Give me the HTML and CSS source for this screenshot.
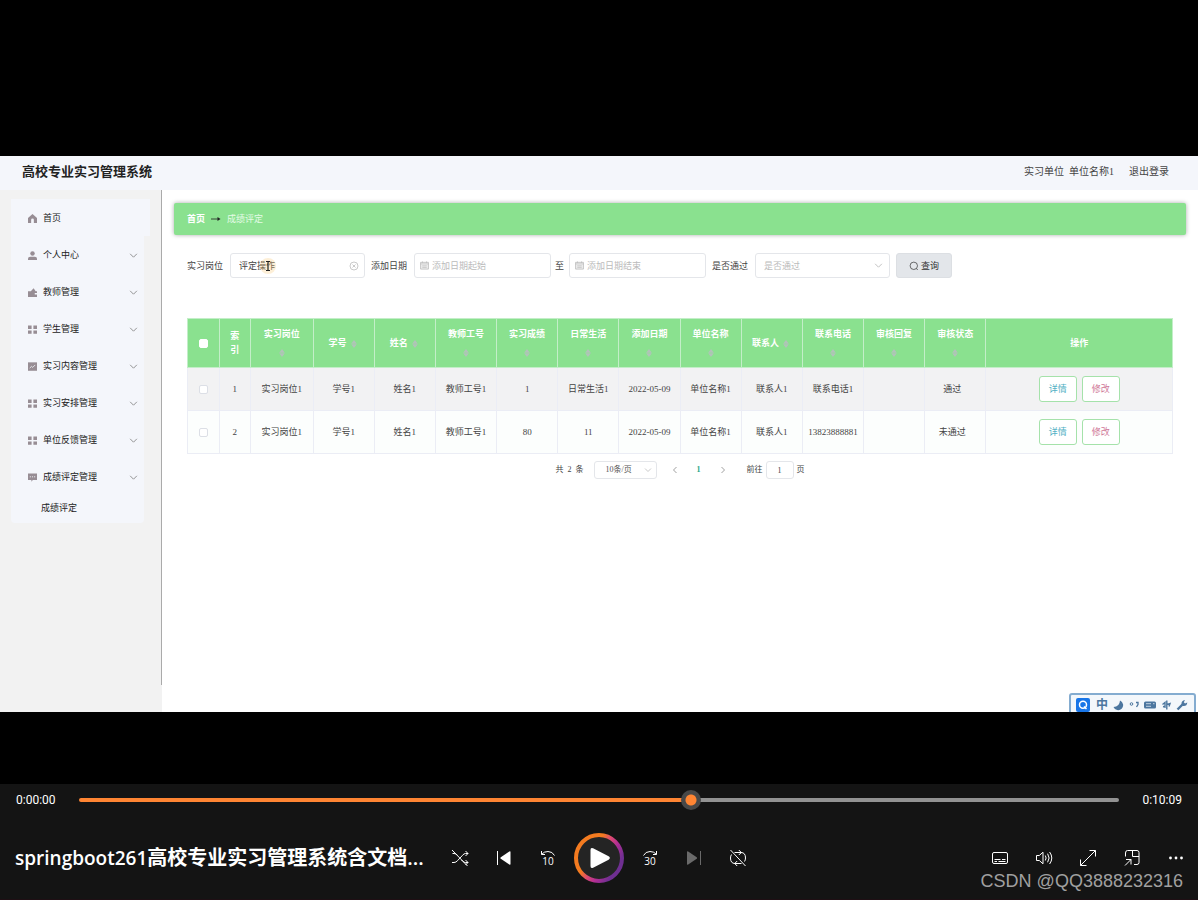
FILE: index.html
```
<!DOCTYPE html>
<html lang="zh-CN">
<head>
<meta charset="utf-8">
<title>高校专业实习管理系统</title>
<link rel="stylesheet" href="styles.css">
</head>
<body>
<svg class="sprite" aria-hidden="true">
  <symbol id="down" viewBox="0 0 8 8"><path d="M1 2.5l3 3 3-3" fill="none" stroke="currentColor" stroke-width=".8"/></symbol>
  <symbol id="sort" viewBox="0 0 6 8"><path d="M3 0L5.800 3.700H.2zM3 8l2.800-3.700H.2z" fill="currentColor"/></symbol>
  <symbol id="grid" viewBox="0 0 8 8"><path d="M0 .5h3.200v3H0zM4.800.5H8v3H4.800zM0 4.800h3.200v3H0zM4.800 4.800H8v3H4.800z" fill="currentColor"/></symbol>
  <symbol id="cal" viewBox="0 0 8 8"><path d="M.5 1.200h7v6h-7z" fill="#eee" stroke="currentColor" stroke-width=".7"/><path d="M.5 2.600h7M2.200.3v1.500M5.800.3v1.500M2 4.300h4M2 5.700h4" fill="none" stroke="currentColor" stroke-width=".6"/></symbol>
</svg>
<main class="stage">
  <section class="app">
    <header class="top">
      <h1 class="brand">高校专业实习管理系统</h1>
      <div class="user"><span>实习单位&nbsp; 单位名称1</span><a href="#">退出登录</a></div>
    </header>
    <div class="body">
      <aside class="side">
        <nav class="rail">
          <ul class="menu">
            <li><a class="item home" href="#"><svg class="ico" viewBox="0 0 8 8"><path d="M4 0L0 3.600V8h2.800V5.200a1.200 1.200 0 0 1 2.400 0V8H8V3.600z" fill="currentColor"/></svg>首页</a></li>
            <li><a class="item" href="#"><svg class="ico" viewBox="0 0 8 8"><circle cx="4" cy="2.200" r="2" fill="currentColor"/><path d="M0 8V6.600Q0 5 2 5h4q2 0 2 1.600V8z" fill="currentColor"/></svg>个人中心<svg class="arrow"><use href="#down"/></svg></a></li>
            <li><a class="item" href="#"><svg class="ico" viewBox="0 0 8 8"><path d="M0 2.800h2.500L5 .3l1.800 2.500H8v1.700H6v1.300h2V8H0z" fill="currentColor"/></svg>教师管理<svg class="arrow"><use href="#down"/></svg></a></li>
            <li><a class="item" href="#"><svg class="ico"><use href="#grid"/></svg>学生管理<svg class="arrow"><use href="#down"/></svg></a></li>
            <li><a class="item" href="#"><svg class="ico" viewBox="0 0 8 8"><path d="M0 .3h8v7.500H0z" fill="currentColor"/><path d="M1.500 5.400l1.700-1.500 1 .9 2.200-2.200" fill="none" stroke="#f4f6fb" stroke-width=".7"/></svg>实习内容管理<svg class="arrow"><use href="#down"/></svg></a></li>
            <li><a class="item" href="#"><svg class="ico"><use href="#grid"/></svg>实习安排管理<svg class="arrow"><use href="#down"/></svg></a></li>
            <li><a class="item" href="#"><svg class="ico"><use href="#grid"/></svg>单位反馈管理<svg class="arrow"><use href="#down"/></svg></a></li>
            <li><a class="item" href="#"><svg class="ico" viewBox="0 0 8 8"><path d="M0 .5h8v5.800H4.300L3 7.800V6.300H0z" fill="currentColor"/><path d="M1.600 3.400h1M3.500 3.400h1M5.400 3.400h1" stroke="#f4f6fb" stroke-width=".8"/></svg>成绩评定管理<svg class="arrow"><use href="#down"/></svg></a>
              <a class="sub" href="#">成绩评定</a></li>
          </ul>
        </nav>
      </aside>
      <div class="content">
        <nav class="crumb"><b>首页</b><svg class="to" viewBox="0 0 10 6"><path d="M0 3h7" stroke="#222" stroke-width=".8"/><path d="M6.500 1L9.500 3l-3 2z" fill="#222"/></svg><span>成绩评定</span></nav>
        <form class="filters">
          <label for="post">实习岗位</label>
          <div class="field"><input id="post" value="评定操作"><svg class="clear" viewBox="0 0 10 10"><path d="M3.500 3.500l3 3m0-3l-3 3" stroke="currentColor" stroke-width=".8"/><circle cx="5" cy="5" r="4" fill="none" stroke="currentColor" stroke-width=".8"/></svg>
            <svg class="pointer" viewBox="0 0 16 16"><circle cx="8" cy="8" r="8" fill="#f7c97a" opacity=".3"/><path d="M6 3.500h4M8 3.500v9M6 12.500h4" stroke="#222" fill="none"/></svg></div>
          <label for="from">添加日期</label>
          <div class="field date"><svg class="cal"><use href="#cal"/></svg><input id="from" placeholder="添加日期起始"></div>
          <label class="until" for="until">至</label>
          <div class="field date"><svg class="cal"><use href="#cal"/></svg><input id="until" placeholder="添加日期结束"></div>
          <label for="pass">是否通过</label>
          <div class="field"><select id="pass"><option>是否通过</option></select><svg class="drop"><use href="#down"/></svg></div>
          <button class="query" type="button"><svg class="lens" viewBox="0 0 10 10"><circle cx="4.800" cy="4.800" r="3.700" fill="none" stroke="currentColor" stroke-width=".7"/><path d="M7.300 7.500l1.500 1.500" stroke="currentColor" stroke-width=".7"/></svg>查询</button>
        </form>
        <table class="grid">
          <colgroup><col class="c-s"><col class="c-s"><col class="c-l"><col class="c-m" span="11"><col></colgroup>
          <thead><tr>
            <th><input type="checkbox" aria-label="全选"></th><th>索<br>引</th>
            <th>实习岗位 <svg class="sort"><use href="#sort"/></svg></th><th>学号 <svg class="sort"><use href="#sort"/></svg></th><th>姓名 <svg class="sort"><use href="#sort"/></svg></th><th>教师工号 <svg class="sort"><use href="#sort"/></svg></th><th>实习成绩 <svg class="sort"><use href="#sort"/></svg></th><th>日常生活 <svg class="sort"><use href="#sort"/></svg></th><th>添加日期 <svg class="sort"><use href="#sort"/></svg></th><th>单位名称 <svg class="sort"><use href="#sort"/></svg></th><th>联系人 <svg class="sort"><use href="#sort"/></svg></th><th>联系电话 <svg class="sort"><use href="#sort"/></svg></th><th>审核回复 <svg class="sort"><use href="#sort"/></svg></th><th>审核状态 <svg class="sort"><use href="#sort"/></svg></th><th>操作</th>
          </tr></thead>
          <tbody>
            <tr class="hover"><td><input type="checkbox" aria-label="选择 1"></td><td>1</td><td>实习岗位1</td><td>学号1</td><td>姓名1</td><td>教师工号1</td><td>1</td><td>日常生活1</td><td>2022-05-09</td><td>单位名称1</td><td>联系人1</td><td>联系电话1</td><td></td><td class="state">通过</td><td><div class="acts"><button class="view">详情</button><button class="edit">修改</button></div></td></tr>
            <tr><td><input type="checkbox" aria-label="选择 2"></td><td>2</td><td>实习岗位1</td><td>学号1</td><td>姓名1</td><td>教师工号1</td><td>80</td><td>11</td><td>2022-05-09</td><td>单位名称1</td><td>联系人1</td><td>13823888881</td><td></td><td class="state">未通过</td><td><div class="acts"><button class="view">详情</button><button class="edit">修改</button></div></td></tr>
          </tbody>
        </table>
        <div class="pager">
          <span class="total">共&nbsp; 2 &nbsp;条</span>
          <div class="field size"><select aria-label="每页条数"><option>10条/页</option></select><svg class="drop"><use href="#down"/></svg></div>
          <button class="turn" aria-label="上一页"><svg viewBox="0 0 8 8"><path d="M5.500 1l-3 3 3 3" fill="none" stroke="currentColor" stroke-width=".8"/></svg></button>
          <button class="turn now">1</button>
          <button class="turn" aria-label="下一页"><svg viewBox="0 0 8 8"><path d="M2.500 1l3 3-3 3" fill="none" stroke="currentColor" stroke-width=".8"/></svg></button>
          <label class="jump">前往<input value="1">页</label>
        </div>
      </div>
    </div>
    <div class="ime">
      <svg class="q" viewBox="0 0 14 14"><rect width="14" height="14" rx="2" fill="#1976e8"/><circle cx="7" cy="6.800" r="3.500" fill="none" stroke="#fff" stroke-width="1.500"/><path d="M8 8.500l2.500 2.500" stroke="#fff" stroke-width="1.500"/></svg>
      <b>中</b>
      <svg viewBox="0 0 12 12"><path d="M8 1.500a5 5 0 1 1-6.500 6.500Q7.500 8 8 1.500z" fill="currentColor"/></svg>
      <svg viewBox="0 0 12 12"><circle cx="3.500" cy="5" r="1.300" fill="none" stroke="currentColor"/><path d="M8 3.500h2v2L8.500 8" fill="none" stroke="currentColor" stroke-width="1.300"/></svg>
      <svg viewBox="0 0 12 12"><rect y="2.500" width="12" height="7" rx="1.500" fill="currentColor"/><path d="M2 4.700h5M9 4.700h1.500M2 7.300h5" stroke="#dfe9f3" stroke-width=".8"/></svg>
      <svg viewBox="0 0 12 12"><path d="M2.500 5.500L5 3.500V8L3 7.500M6.800 1.500V10.500M7 5.500L10 4.500 9 7.500" fill="none" stroke="currentColor" stroke-width="1.400"/></svg>
      <svg viewBox="0 0 12 12"><path d="M1.500 10.500l5-5" stroke="currentColor" stroke-width="2.400"/><path d="M5.500 5.500Q5 1.500 9 1L7.800 3.200 9 4.500l2.300-1Q11 7.500 7 7z" fill="currentColor"/></svg>
    </div>
  </section>
</main>
<footer class="player">
  <div class="seek">
    <span>0:00:00</span>
    <input type="range" min="0" max="1000" value="590" aria-label="播放进度">
    <span>0:10:09</span>
  </div>
  <div class="bar">
    <h2 class="name"><span>springboot261</span>高校专业实习管理系统含文档...</h2>
    <div class="keys">
      <button aria-label="随机播放"><svg viewBox="0 0 18 18"><path d="M1 13.500h2q2 0 3.500-1.800l5-5.400q1.500-1.800 3-1.800H17M1.500 4.500H3q2 0 3.500 1.800M10.500 11l1 1q1.500 1.500 3 1.500H17M14.500 2L17 4.500 14.500 7M14.500 11l2.500 2.500-2.500 2.500M1 1l15.500 16"/></svg></button>
      <button aria-label="上一个"><svg viewBox="0 0 18 18"><path d="M2.500 2v14"/><path class="solid" d="M15.500 3v12q0 1.200-1.200.5L5.800 9.800q-.9-.8 0-1.600l8.500-5.700q1.200-.7 1.200.5z"/></svg></button>
      <button aria-label="后退 10 秒"><svg viewBox="0 0 18 18"><path d="M2.500 2v3.500H6M2.800 5.200Q5 2.500 9 2.500q4.500 0 6.500 4"/><text x="9" y="15.500">10</text></svg></button>
      <button class="play" aria-label="播放"><svg viewBox="0 0 50 50"><defs><linearGradient id="ring" x1=".1" y1=".3" x2=".85" y2=".75"><stop offset=".3" stop-color="#f47b20"/><stop offset=".5" stop-color="#dd4a70"/><stop offset=".72" stop-color="#b02d95"/><stop offset="1" stop-color="#6f2f91"/></linearGradient></defs><circle cx="25" cy="25" r="23" fill="#242424" stroke="url(#ring)" stroke-width="4"/><path class="solid" d="M16.500 17v16q0 3 2.600 1.700l15.500-8q2.500-1.700 0-3.400l-15.500-8q-2.600-1.300-2.600 1.700z"/></svg></button>
      <button aria-label="前进 30 秒"><svg viewBox="0 0 18 18"><path d="M15.500 2v3.500H12M15.200 5.200Q13 2.500 9 2.500q-4.500 0-6.500 4"/><text x="9" y="15.500">30</text></svg></button>
      <button class="off" aria-label="下一个"><svg viewBox="0 0 18 18"><path d="M15.500 2v14"/><path class="solid" d="M2 3v12q0 1.200 1.200.5l8.500-5.700q.9-.8 0-1.600L3.200 2.500Q2 1.800 2 3z"/></svg></button>
      <button aria-label="循环"><svg viewBox="0 0 18 18"><path d="M5.500 3.500h6.500q4.500 0 4.500 5.500 0 2-1 3.500M9.800 1l2.500 2.500L9.800 6M12.500 14.500H6q-4.500 0-4.500-5.500 0-2 1-3.500M8.200 12l-2.500 2.500L8.200 17M1.500 1l15 16"/></svg></button>
    </div>
    <div class="keys end">
      <button aria-label="字幕"><svg viewBox="0 0 18 18"><rect x="1.500" y="3.500" width="15" height="11" rx="1.500"/><path d="M3.500 10.500h6M11 10.500h3.500M3.500 12.500H6M7.500 12.500h7"/></svg></button>
      <button aria-label="音量"><svg viewBox="0 0 18 18"><path d="M1.500 6.500h2.800L8 3.200v11.600l-3.700-3.300H1.500zM10.300 6.500q1.600 2.500 0 5M12.600 4.700q3 4.300 0 8.600M14.600 3q4.400 6 0 12"/></svg></button>
      <button aria-label="全屏"><svg viewBox="0 0 18 18"><path d="M10.500 1.500h6v6M1.500 10.500v6h6M16.500 1.500l-15 15"/></svg></button>
      <button aria-label="迷你播放器"><svg viewBox="0 0 18 18"><path d="M2.500 7.500V4q0-2.500 2-2.500h9.500q2 0 2 2v10q0 2-2 2h-3M9.500 1.500v6h6.500M3 10.500h5v5M8 10.500L2 16.500"/></svg></button>
      <button aria-label="更多"><svg viewBox="0 0 18 18"><g class="solid"><circle cx="3.500" cy="9" r="1.400"/><circle cx="9" cy="9" r="1.400"/><circle cx="14.500" cy="9" r="1.400"/></g></svg></button>
    </div>
  </div>
  <p class="mark">CSDN @QQ3888232316</p>
</footer>
</body>
</html>
```
FILE: styles.css
```
* { box-sizing: border-box; }
body {
  margin: 0;
  min-height: 100vh;
  display: flex;
  flex-direction: column;
  background: #000;
  font-family: "Liberation Serif", "Noto Sans CJK SC", sans-serif;
  font-size: 9px;
  line-height: 16px;
  color: #444;
}
button, input, select { font: inherit; color: inherit; margin: 0; }
a { color: inherit; text-decoration: none; }
ul { list-style: none; margin: 0; padding: 0; }
.sprite { display: none; }
.stage { flex: 1; display: flex; padding: 156px 0 72px; }
.app { position: relative; flex: 1; display: flex; flex-direction: column; background: #fff; overflow: hidden; }

.top { display: flex; justify-content: space-between; align-items: center; height: 34px; padding: 0 29px 2px 22px; background: #f4f6fb; }
.brand { margin: 0; font-size: 13px; font-weight: 600; color: #222; }
.user { display: flex; gap: 15px; font-size: 10px; }
.body { flex: 1; display: flex; }

.side { width: 162px; background: #f2f2f2; padding-bottom: 27px; display: flex; }
.rail { flex: 1; padding: 9px 11px; border-right: 1px solid #aaa; }
.menu { width: 133px; background: #f4f6fb; border-radius: 4px; color: #222; }
.item { display: flex; align-items: center; gap: 6px; height: 37px; padding: 1px 6px 0 17px; }
.home { width: 139px; background: #f4f6fb; }
.ico { width: 9px; height: 9px; color: #978d94; }
.arrow { width: 9px; height: 9px; margin-left: auto; color: #888; }
.sub { display: block; padding: 5px 0 7px 30px; }

.content { flex: 1; min-width: 0; padding: 13px 12px; }
.crumb { display: flex; align-items: center; height: 32px; padding: 0 13px; gap: 6px; background: #8ae18f; border-radius: 2px; box-shadow: 0 0 4px #aaa; color: #e4fbe6; }
.crumb b { color: #fff; }
.to { width: 10px; height: 6px; }
.filters { display: flex; align-items: center; gap: 7px; padding: 0 13px; margin-top: 18px; }
.field { position: relative; display: flex; align-items: center; width: 135px; height: 25px; border: 1px solid #e4e6ea; border-radius: 3px; background: #fff; margin-right: -1px; }
.field input, .field select { width: 100%; height: 100%; padding: 0 8px; border: 0; background: none; outline: 0; appearance: none; }
.field select { color: #bbb; }
.date { width: 137px; padding-left: 5px; margin-right: -3px; }
.date input { padding: 0 3px; }
.date svg { width: 9px; height: 9px; flex: none; color: #bbb; }
::placeholder { color: #bbb; }
.until { margin-right: -2px; }
.until + .date { margin-right: -1px; }
.clear { position: absolute; right: 5px; width: 10px; height: 10px; color: #bbb; }
.pointer { position: absolute; left: 29px; width: 16px; height: 16px; }
.drop { position: absolute; right: 6px; width: 9px; height: 9px; color: #bbb; pointer-events: none; }
.query { display: flex; align-items: center; justify-content: center; gap: 2px; width: 56px; height: 25px; padding: 0; border: 1px solid #dcdfe3; border-radius: 3px; background: #e3e6ea; color: #333; }
.lens { width: 10px; height: 10px; }

.grid { width: calc(100% - 26px); margin: 40px 13px 0; table-layout: fixed; border-collapse: collapse; background: #fcfefd; }
.c-s { width: 3.2%; }
.c-l { width: 6.35%; }
.c-m { width: 6.21%; }
th, td { padding: 0; text-align: center; border: 1px solid #ebedf5; }
th { height: 49px; padding: 0 8px; line-height: 14px; background: #8ae18f; color: #fff; border-color: #c3eec8; }
th:nth-child(n+3) { line-height: 18px; }
th:nth-child(-n+2) { padding: 0; }
td { height: 43px; }
.sort { width: 6px; height: 8px; margin: 0 2px; vertical-align: middle; color: #b3c2bb; }
.hover td { background: #f2f2f3; }
td.state { padding-right: 6px; }
.grid input { appearance: none; display: block; width: 9px; height: 9px; margin: 0 auto; border: 1px solid #dcdfe6; border-radius: 2px; background: #fff; }
.grid th input { border-color: #fff; }
.acts { display: flex; justify-content: center; gap: 5px; }
.acts button { width: 38px; height: 26px; padding: 0; border: 1px solid #a5e2aa; border-radius: 3px; background: #fff; }
.acts .view { color: #4fb0c4; }
.acts .edit { color: #cf7897; }

.pager { display: flex; justify-content: center; align-items: center; margin-top: 7px; font-size: 8px; }
.size { width: 63px; height: 18px; margin: 0 6px 0 10px; }
.size select { padding: 0 11px; color: #555; }
.size .drop { right: 4px; width: 8px; height: 8px; }
.turn { display: flex; align-items: center; justify-content: center; width: 24px; height: 18px; padding: 0; border: 0; background: none; color: #888; }
.turn svg { width: 8px; height: 8px; }
.now { color: #2aa889; font-weight: bold; }
.jump { display: flex; align-items: center; gap: 3px; margin-left: 12px; }
.jump input { width: 28px; height: 18px; padding: 0; border: 1px solid #e4e6ea; border-radius: 3px; text-align: center; }

.ime { position: absolute; right: 2px; bottom: -4px; display: flex; align-items: center; gap: 4px; height: 23px; padding: 0 6px 0 5px; border: 2px solid #84acd0; border-radius: 3px; background: #f3f7fb; color: #4c769f; }
.ime svg { width: 12px; height: 12px; }
.ime .q { width: 14px; height: 14px; margin-right: 2px; }
.ime b { font-size: 12px; }

.player { position: relative; background: #141414; color: #fff; font-family: "Open Sans", "Noto Sans CJK SC", sans-serif; }
.seek { display: flex; align-items: center; gap: 23px; height: 32px; padding: 0 16px; font-family: Roboto, sans-serif; font-size: 12px; }
.seek input { flex: 1; min-width: 0; height: 20px; appearance: none; background: none; }
.seek input::-webkit-slider-runnable-track { height: 4px; border-radius: 2px; background: linear-gradient(90deg, #ff8533 58.8%, #929292 58.8%); }
.seek input::-webkit-slider-thumb { appearance: none; width: 20px; height: 20px; margin-top: -8px; border-radius: 50%; background: radial-gradient(circle, #ff8533 5px, #484848 6px); }
.bar { display: grid; grid-template-columns: 1fr auto 1fr; align-items: center; height: 84px; border-bottom: 1px solid #1f0f14; }
.name { margin: 0; padding-left: 15px; font-size: 20px; line-height: 28px; font-weight: 600; white-space: nowrap; }
.name span { font-size: 19px; }
.keys { display: flex; align-items: center; }
.end { justify-content: flex-end; }
.keys button { display: flex; align-items: center; justify-content: center; width: 44px; height: 44px; padding: 0; border: 0; background: none; color: #fff; }
.keys svg { width: 18px; height: 18px; fill: none; stroke: currentColor; stroke-width: 1; }
.keys .solid { fill: currentColor; stroke: none; }
.keys text { fill: currentColor; stroke: none; font-size: 10px; font-weight: 400; text-anchor: middle; }
.keys .off { color: #6a6a6a; }
.keys .play { width: 58px; height: 50px; }
.play svg { width: 50px; height: 50px; }
.mark { position: absolute; right: 15px; bottom: 8px; margin: 0; font: 18px/22px "Liberation Sans", sans-serif; color: #a0a0a0; }
```
